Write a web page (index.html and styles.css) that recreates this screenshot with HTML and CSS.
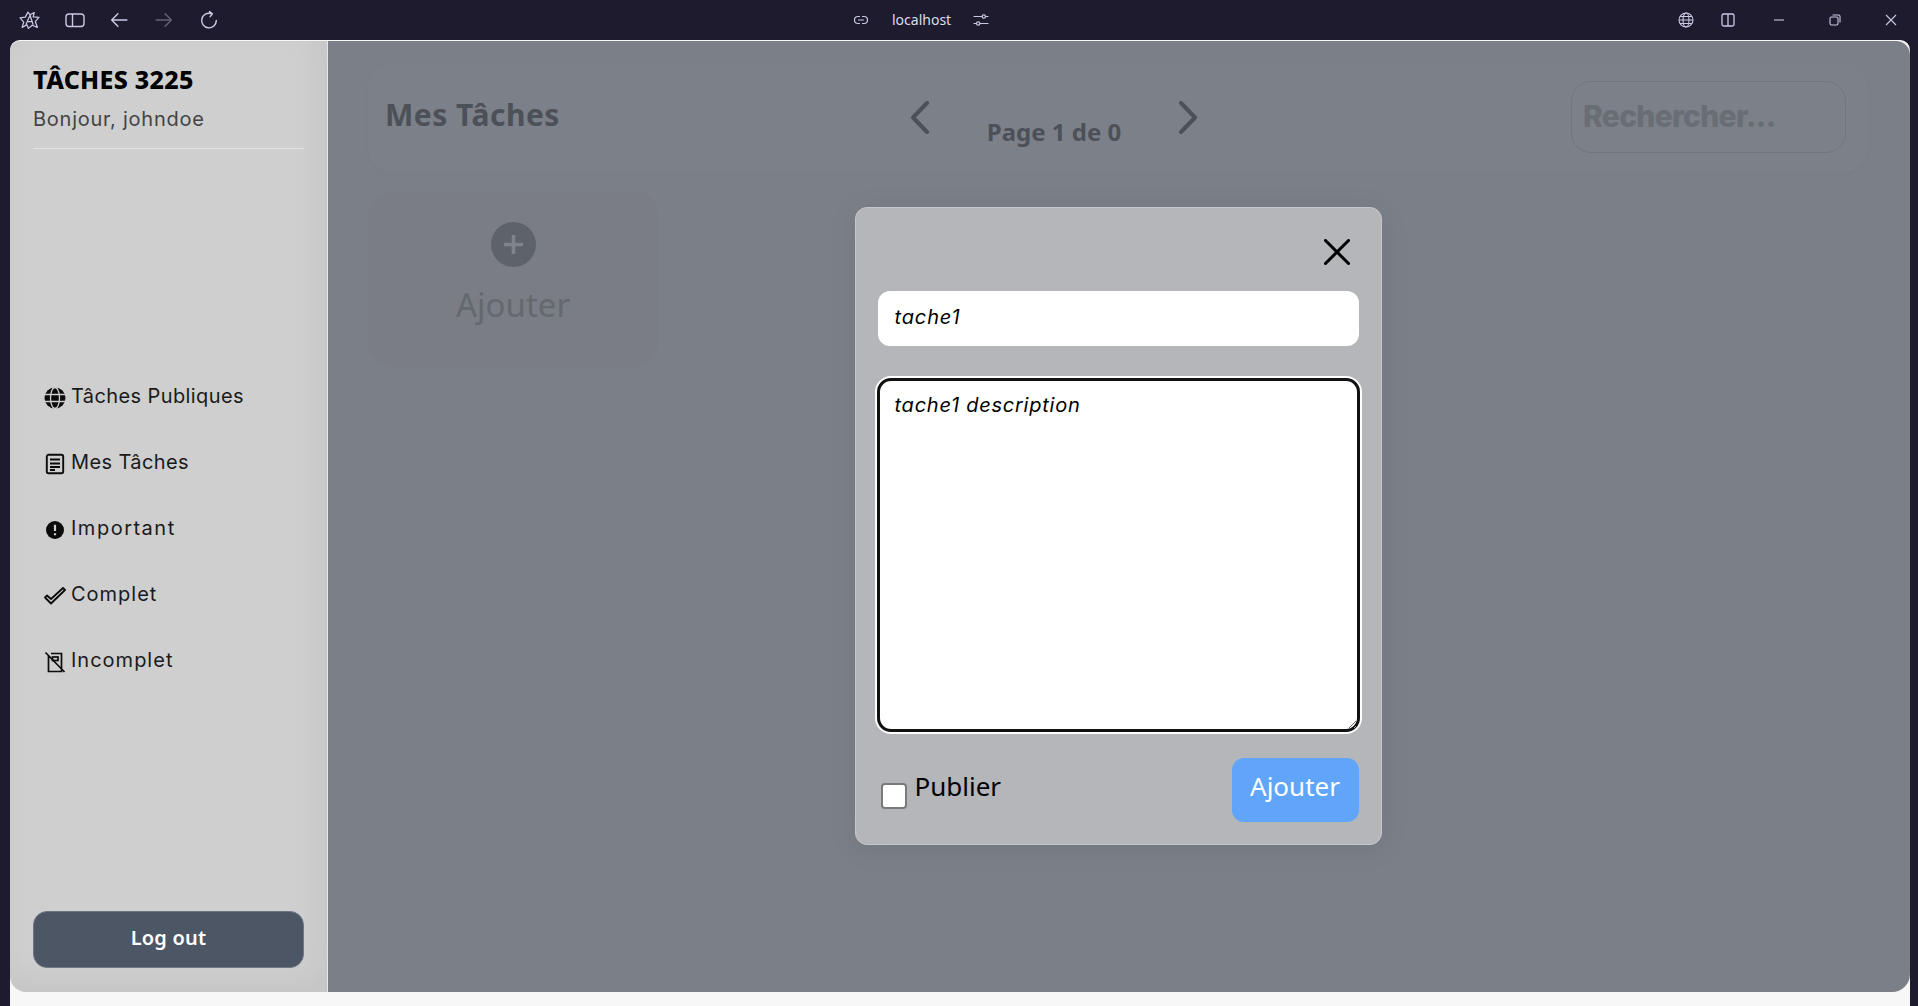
FILE: index.html
```html
<!DOCTYPE html>
<html lang="fr">
<head>
<meta charset="utf-8">
<title>Tâches 3225</title>
<link rel="stylesheet" href="styles.css">
</head>
<body>
<header class="titlebar">
  <div class="tb-group tb-left">
    <svg class="tb-logo" viewBox="0 0 20 18" fill="none" stroke="currentColor" stroke-width="1.200" stroke-linejoin="round"><path d="M1 6.500 6 5.800 8.500 1 10.500 3.500 14.500 1.500 13.500 5.500 19 6 15.500 10 17.500 15.500 12.500 13.500 9 16.500 7.500 13 3 15.500 4.500 10.500Z"/><path d="M6.500 13 10.500 4 13.500 13M8.500 10h4"/></svg>
    <svg class="tb-icon" viewBox="0 0 20 16" fill="none" stroke="currentColor" stroke-width="1.400"><rect x="1" y="2" width="18" height="12.500" rx="3"/><path d="M7.500 2v12.500"/></svg>
    <svg class="tb-icon" viewBox="0 0 16 16" fill="none" stroke="currentColor" stroke-width="1.300" stroke-linecap="round" stroke-linejoin="round"><path d="M15 8H1.500M7 2.500 1.500 8 7 13.500"/></svg>
    <svg class="tb-icon tb-dim" viewBox="0 0 16 16" fill="none" stroke="currentColor" stroke-width="1.300" stroke-linecap="round" stroke-linejoin="round"><path d="M1 8h13.500M9 2.500 14.500 8 9 13.500"/></svg>
    <svg class="tb-icon" viewBox="0 0 16 16" fill="none" stroke="currentColor" stroke-width="1.300" stroke-linecap="round" stroke-linejoin="round"><path d="M14.500 8.500A6.500 6.500 0 1 1 10 2.300M8.500 .5 11 2.500 9 5"/></svg>
  </div>
  <div class="tb-group tb-center">
    <svg class="tb-small" viewBox="0 0 16 16" fill="none" stroke="currentColor" stroke-width="1.200" stroke-linecap="round"><path d="M6.500 4.500H5a3.500 3.500 0 0 0 0 7h1.500M9.500 4.500H11a3.500 3.500 0 0 1 0 7H9.500M5.500 8h5"/></svg>
    <span class="tb-url">localhost</span>
    <svg class="tb-small tb-sliders" viewBox="0 0 16 16" fill="none" stroke="currentColor" stroke-width="1.200" stroke-linecap="round"><path d="M1 4.500h8M12.500 4.500H15M1 11.500h2.500M7 11.500h8"/><circle cx="10.800" cy="4.500" r="1.700"/><circle cx="5.200" cy="11.500" r="1.700"/></svg>
  </div>
  <div class="tb-group tb-right">
    <svg class="tb-small" viewBox="0 0 16 16" fill="none" stroke="currentColor" stroke-width="1.100"><circle cx="8" cy="8" r="7"/><ellipse cx="8" cy="8" rx="3" ry="7"/><path d="M1 8h14M2 4.500h12M2 11.500h12"/></svg>
    <svg class="tb-small tb-panel" viewBox="0 0 16 16" fill="none" stroke="currentColor" stroke-width="1.300"><rect x="2" y="2" width="12" height="12" rx="1.500"/><path d="M8 2v12"/></svg>
    <svg class="tb-win tb-min" viewBox="0 0 12 12" fill="none" stroke="currentColor" stroke-width="1.100"><path d="M1 6h10"/></svg>
    <svg class="tb-win tb-restore" viewBox="0 0 12 12" fill="none" stroke="currentColor" stroke-width="1.100"><rect x="1" y="3" width="8" height="8" rx="1.500"/><path d="M3.500 1H9.500a1.500 1.500 0 0 1 1.500 1.500V8.500"/></svg>
    <svg class="tb-win" viewBox="0 0 12 12" fill="none" stroke="currentColor" stroke-width="1.100"><path d="M1 1l10 10M11 1 1 11"/></svg>
  </div>
</header>
<div class="shell">
  <aside class="sidebar">
    <div class="brand">
      <h1 class="brand-title">TÂCHES 3225</h1>
      <p class="brand-hello">Bonjour, johndoe</p>
    </div>
    <nav class="nav">
      <a class="nav-item">
        <svg class="nav-icon" viewBox="0 0 22 22"><circle cx="11" cy="11" r="10.500" fill="#0b0b0b"/><g fill="none" stroke="#cfcfcf" stroke-width="1.300"><ellipse cx="11" cy="11" rx="4.500" ry="10.500"/><path d="M0 7.500h22M0 14.500h22"/></g></svg>
        <span>Tâches Publiques</span>
      </a>
      <a class="nav-item">
        <svg class="nav-icon" viewBox="0 0 22 22" fill="none" stroke="#0b0b0b" stroke-width="1.900"><rect x="2.800" y="1.800" width="16.400" height="18.500" rx="1.800"/><path d="M6 6.500h10M6 10.500h10M6 14h10M6 17h5"/></svg>
        <span>Mes Tâches</span>
      </a>
      <a class="nav-item nav-item-wide">
        <svg class="nav-icon" viewBox="0 0 22 22"><circle cx="11" cy="11" r="9" fill="#0b0b0b"/><path d="M11 5.800v6.200M11 14.200v2" stroke="#cfcfcf" stroke-width="2.200" fill="none"/></svg>
        <span>Important</span>
      </a>
      <a class="nav-item nav-item-mid">
        <svg class="nav-icon" viewBox="0 0 22 22" fill="none" stroke="#0b0b0b" stroke-width="1.800" stroke-linejoin="round"><path d="M1 12.500 3 10.500 7 14 19 3 21 5 7 18.500Z"/></svg>
        <span>Complet</span>
      </a>
      <a class="nav-item nav-item-mid">
        <svg class="nav-icon" viewBox="0 0 22 22" fill="none" stroke="#0b0b0b" stroke-width="1.700"><path d="M4.500 5v15.500h13V2.500H7M1.500 1.500l19 19.500"/><rect x="8.500" y="6" width="5.500" height="3.500"/></svg>
        <span>Incomplet</span>
      </a>
    </nav>
    <button class="logout" type="button">Log out</button>
  </aside>
  <main class="main">
    <section class="head-panel">
      <h2 class="head-title">Mes Tâches</h2>
      <div class="pager">
        <svg class="chev" viewBox="0 0 20 33" fill="none" stroke="currentColor" stroke-width="4" stroke-linecap="round" stroke-linejoin="round"><path d="M17 2 3 16.500 17 31"/></svg>
        <span class="pager-text">Page 1 de 0</span>
        <svg class="chev" viewBox="0 0 20 33" fill="none" stroke="currentColor" stroke-width="4" stroke-linecap="round" stroke-linejoin="round"><path d="M3 2 17 16.500 3 31"/></svg>
      </div>
      <div class="search">Rechercher...</div>
    </section>
    <section class="add-card">
      <svg class="add-plus" viewBox="0 0 45 45"><circle cx="22.500" cy="22.500" r="22.500" fill="#5e626b"/><path d="M22.500 13v19M13 22.500h19" stroke="#7f838a" stroke-width="3.600" fill="none"/></svg>
      <span class="add-label">Ajouter</span>
    </section>
    <div class="overlay">
      <form class="modal">
        <div class="modal-close-row">
          <svg class="modal-close" viewBox="0 0 26 26" fill="none" stroke="#000" stroke-width="3" stroke-linecap="round"><path d="M1.500 1.500l23 23M24.500 1.500l-23 23"/></svg>
        </div>
        <input class="field" type="text" value="tache1">
        <textarea class="area">tache1 description</textarea>
        <div class="modal-foot">
          <label class="publish"><input class="check" type="checkbox"><span>Publier</span></label>
          <button class="submit" type="button">Ajouter</button>
        </div>
      </form>
    </div>
  </main>
</div>
</body>
</html>
```
FILE: styles.css
```css
* { box-sizing: border-box; }
html, body { height: 100%; }
body {
  margin: 0;
  height: 100vh;
  overflow: hidden;
  display: flex;
  flex-direction: column;
  background: #1e1b2e;
  font-family: "Inter", "Liberation Sans", sans-serif;
}
.titlebar {
  height: 40px;
  flex: none;
  display: grid;
  grid-template-columns: 853px auto 1fr;
  align-items: center;
  color: #c9c9e2;
}
.tb-group { display: flex; align-items: center; }
.tb-left { padding-left: 19px; gap: 25px; }
.tb-logo { width: 21px; height: 19px; }
.tb-icon { width: 20px; height: 20px; }
.tb-icon:nth-child(3) { margin-left: 0; width: 18px; }
.tb-icon:nth-child(4) { width: 18px; margin-left: 2px; }
.tb-icon:nth-child(5) { width: 18px; margin-left: 2px; }
.tb-dim { opacity: .4; }
.tb-center { gap: 23px; }
.tb-small { width: 16px; height: 16px; }
.tb-sliders { margin-left: -2px; }
.tb-url { font: 14px "Noto Sans", sans-serif; color: #dcdcec; margin: 0 1px 2px 0; }
.tb-right { justify-content: flex-end; padding-right: 21px; }
.tb-panel { margin-left: 26px; }
.tb-win { width: 12px; height: 12px; margin-left: 44px; }
.tb-min { margin-left: 37px; }
.shell {
  flex: 1;
  min-height: 0;
  margin: 0 8px 0 10px;
  display: flex;
  background: #f7f7f7;
  padding-bottom: 14px;
  border-top: 1px solid #f7f7f7;
  border-radius: 10px 10px 0 0;
}
.sidebar {
  width: 318px;
  flex: none;
  display: flex;
  flex-direction: column;
  padding: 22px 23px 24px;
  background: #cfcfcf;
  box-shadow: inset -8px -12px 30px rgba(0, 0, 0, .05);
  border-right: 1px solid #e6e6e6;
  border-radius: 10px 0 0 16px;
}
.brand { border-bottom: 1px solid #e4e4e4; height: 86px; }
.brand-title {
  margin: 0;
  font: 800 25px/33px "Noto Sans", sans-serif;
  color: #000;
  letter-spacing: .3px;
}
.brand-hello {
  margin: 9px 0 0;
  font: 400 20px/28px "Inter", sans-serif;
  color: #444;
  letter-spacing: .75px;
}
.nav {
  flex: 1;
  display: flex;
  flex-direction: column;
  gap: 22px;
  padding: 225px 0 0 11px;
}
.nav-item {
  height: 44px;
  display: flex;
  align-items: center;
  gap: 5px;
  font: 400 20px/28px "Inter", sans-serif;
  color: #1a1a1a;
  letter-spacing: .4px;
}
.nav-item-wide { letter-spacing: 1.5px; }
.nav-item-mid { letter-spacing: 1px; }
.nav-item span { margin-top: -1px; }
.nav-icon { width: 22px; height: 22px; flex: none; margin-top: 3px; }
.logout {
  height: 57px;
  flex: none;
  border: 1px solid #6f7785;
  border-radius: 14px;
  background: #4d5665;
  color: #fff;
  padding: 0 0 5px;
  letter-spacing: .2px;
  font: 600 20px "Noto Sans", sans-serif;
}
.main {
  flex: 1;
  position: relative;
  min-width: 0;
  background: #7b7f87;
  border-radius: 0 14px 18px 0;
  padding: 22px 42px 0 40px;
  display: flex;
  flex-direction: column;
  align-items: flex-start;
}
.head-panel {
  width: 100%;
  height: 109px;
  flex: none;
  display: flex;
  align-items: center;
  padding: 0 22px 0 17px;
  background: #7c8088;
  border-radius: 24px;
  box-shadow: 0 2px 6px rgba(0, 0, 0, .02);
}
.head-title {
  margin: -5px 0 0;
  width: 525px;
  font: 700 30px/40px "Noto Sans", sans-serif;
  color: #4c5058;
  letter-spacing: .5px;
}
.pager {
  display: flex;
  align-items: center;
  color: #4c5058;
  width: 288px;
  justify-content: space-between;
  margin-top: 0;
}
.chev { width: 20px; height: 33px; }
.pager-text {
  margin-top: 29px;
  font: 700 24px/32px "Noto Sans", sans-serif;
}
.search {
  margin-left: auto;
  width: 275px;
  height: 72px;
  margin-top: -1px;
  padding: 0 0 3px 11px;
  display: flex;
  align-items: center;
  border: 1px solid #72757e;
  border-radius: 20px;
  font: 800 30px "Inter", sans-serif;
  color: #696d76;
  letter-spacing: -.7px;
}
.add-card {
  width: 290px;
  height: 176px;
  margin-top: 19px;
  flex: none;
  display: flex;
  flex-direction: column;
  align-items: center;
  padding-top: 31px;
  background: #7a7d85;
  border-radius: 24px;
}
.add-plus { width: 45px; height: 45px; }
.add-label {
  margin-top: 16px;
  font: 400 33px/44px "Noto Sans", sans-serif;
  color: #64686f;
}
.overlay {
  position: absolute;
  inset: 0;
  display: flex;
  justify-content: center;
  align-items: flex-start;
  padding: 166px 2px 0 0;
}
.modal {
  width: 527px;
  height: 638px;
  padding: 0 22px;
  background: #b5b6ba;
  border: 1px solid #c6c7ca;
  border-radius: 12px;
  box-shadow: 0 4px 30px rgba(0, 0, 0, .08);
  display: flex;
  flex-direction: column;
}
.modal-close-row { display: flex; justify-content: flex-end; padding: 31px 9px 0 0; height: 83px; flex: none; }
.modal-close { width: 26px; height: 26px; }
.field {
  height: 55px;
  flex: none;
  width: 100%;
  border: 0;
  border-radius: 12px;
  padding: 0 17px 3px;
  background: #fff;
  color: #000;
  font: italic 400 20px "Inter", sans-serif;
  letter-spacing: .85px;
  outline: none;
}
.area {
  width: 483px;
  height: 354px;
  flex: none;
  margin: 32px 0 0 -1px;
  padding: 10px 15px;
  border: 3px solid #111;
  box-shadow: 0 0 0 2px #fff;
  border-radius: 14px;
  background: #fff;
  color: #000;
  font: italic 400 20px/28px "Inter", sans-serif;
  letter-spacing: .75px;
}
.modal-foot {
  margin-top: 26px;
  display: flex;
  justify-content: space-between;
  align-items: flex-start;
}
.publish {
  display: flex;
  align-items: flex-start;
  gap: 8px;
  margin: 9px 0 0 3px;
  font: 400 26px/38px "Noto Sans", sans-serif;
  color: #000;
}
.check {
  appearance: none;
  width: 26px;
  height: 26px;
  margin: 16px 0 0;
  background: #fff;
  border: 2px solid #7a7a7a;
  border-radius: 4px;
}
.submit {
  width: 127px;
  height: 64px;
  border: 0;
  border-radius: 12px;
  background: #60a5fa;
  color: #fff;
  padding: 0 0 8px;
  font: 400 26px "Noto Sans", sans-serif;
}
```
